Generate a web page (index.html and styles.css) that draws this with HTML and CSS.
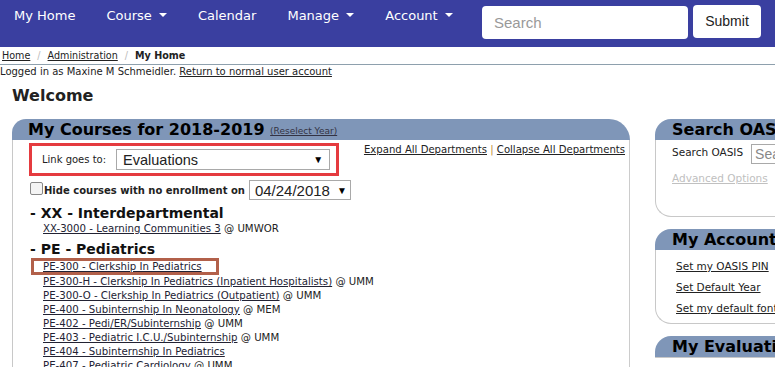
FILE: index.html
```html
<!DOCTYPE html>
<html lang="en">
<head>
<meta charset="utf-8">
<title>My Home</title>
<link rel="stylesheet" href="styles.css">
</head>
<body>
<nav class="topbar">
  <ul class="nav-items">
    <li class="nav-item">My Home</li>
    <li class="nav-item">Course <span class="caret"></span></li>
    <li class="nav-item">Calendar</li>
    <li class="nav-item">Manage <span class="caret"></span></li>
    <li class="nav-item">Account <span class="caret"></span></li>
  </ul>
  <form class="nav-search">
    <div class="search-input">Search</div>
    <div class="submit-btn">Submit</div>
  </form>
</nav>
<div class="breadcrumb">
  <a href="#">Home</a><span class="sep">/</span><a href="#">Administration</a><span class="sep">/</span><b>My Home</b>
</div>
<div class="login-line">Logged in as Maxine M Schmeidler. <a href="#">Return to normal user account</a></div>
<h1 class="welcome">Welcome</h1>
<div class="columns">
  <section class="panel main-panel">
    <div class="panel-head">My Courses for 2018-2019 <a class="small-link" href="#">(Reselect Year)</a></div>
    <div class="panel-body">
      <div class="top-row">
        <div class="link-goes highlight-red">
          <span class="label">Link goes to:</span>
          <div class="fake-select wide">Evaluations<span class="arrow">▼</span></div>
        </div>
        <div class="expand-links"><a href="#">Expand All Departments</a> <span class="bar">|</span> <a href="#">Collapse All Departments</a></div>
      </div>
      <div class="hide-row">
        <span class="checkbox"></span>
        <b>Hide courses with no enrollment on</b>
        <div class="fake-select date">04/24/2018<span class="arrow">▼</span></div>
      </div>
      <h3 class="dept">- XX - Interdepartmental</h3>
      <ul class="courses">
        <li><a href="#">XX-3000 - Learning Communities 3</a> @ UMWOR</li>
      </ul>
      <h3 class="dept">- PE - Pediatrics</h3>
      <ul class="courses">
        <li class="hl-row"><span class="highlight-brown"><a href="#">PE-300 - Clerkship In Pediatrics</a></span></li>
        <li><a href="#">PE-300-H - Clerkship In Pediatrics (Inpatient Hospitalists)</a> @ UMM</li>
        <li><a href="#">PE-300-O - Clerkship In Pediatrics (Outpatient)</a> @ UMM</li>
        <li><a href="#">PE-400 - Subinternship In Neonatology</a> @ MEM</li>
        <li><a href="#">PE-402 - Pedi/ER/Subinternship</a> @ UMM</li>
        <li><a href="#">PE-403 - Pediatric I.C.U./Subinternship</a> @ UMM</li>
        <li><a href="#">PE-404 - Subinternship In Pediatrics</a></li>
        <li><a href="#">PE-407 - Pediatric Cardiology</a> @ UMM</li>
      </ul>
    </div>
  </section>
  <aside class="side">
    <section class="panel side-panel">
      <div class="panel-head">Search OASIS</div>
      <div class="panel-body search-body">
        <div class="search-row"><span>Search OASIS</span><div class="side-input">Search</div></div>
        <a class="adv" href="#">Advanced Options</a>
      </div>
    </section>
    <section class="panel side-panel">
      <div class="panel-head">My Account</div>
      <div class="panel-body account-body">
        <a href="#">Set my OASIS PIN</a>
        <a href="#">Set Default Year</a>
        <a href="#">Set my default font</a>
      </div>
    </section>
    <section class="panel side-panel">
      <div class="panel-head">My Evaluations</div>
      <div class="panel-body"></div>
    </section>
  </aside>
</div>
</body>
</html>
```
FILE: styles.css
```css
html, body {
  margin: 0;
  padding: 0;
  width: 775px;
  height: 367px;
  overflow: hidden;
  background: #fff;
  font-family: "DejaVu Sans", Verdana, sans-serif;
  color: #222;
}
a { color: #222; }

.topbar {
  height: 47px;
  background: #3a3fa0;
  display: flex;
  align-items: flex-start;
}
.nav-items {
  list-style: none;
  margin: 0;
  padding: 0;
  display: flex;
}
.nav-item {
  color: #fff;
  font-size: 13px;
  padding: 8px 15px 0 14px;
  line-height: 16px;
  white-space: nowrap;
}
.nav-item + .nav-item { padding-left: 16px; }
.caret {
  display: inline-block;
  width: 0;
  height: 0;
  border-left: 4px solid transparent;
  border-right: 4px solid transparent;
  border-top: 4px solid #fff;
  vertical-align: 3px;
  margin-left: 3px;
}
.nav-search {
  margin: 5px 0 0 auto;
  padding-right: 14px;
  display: flex;
  gap: 5px;
}
.search-input {
  width: 206px;
  height: 33px;
  box-sizing: border-box;
  margin-top: 1px;
  background: #fff;
  border-radius: 4px;
  padding: 0 12px;
  font: 15px/33px "Liberation Sans", Arial, sans-serif;
  color: #999;
}
.submit-btn {
  width: 68px;
  height: 33px;
  box-sizing: border-box;
  background: #fff;
  border-radius: 4px;
  text-align: center;
  font: 14px/33px "Liberation Sans", Arial, sans-serif;
  color: #222;
}

.breadcrumb {
  font-size: 9.6px;
  line-height: 16px;
  padding: 1px 0 0 2px;
  border-bottom: 1px solid #8ea0ad;
  height: 16px;
}
.breadcrumb a { color: #222; }
.breadcrumb .sep { color: #bbb; margin: 0 7px; }
.login-line {
  font-size: 10px;
  line-height: 14px;
}
.welcome {
  font-size: 16px;
  margin: 6px 0 0 12px;
  line-height: 22px;
  color: #222;
}

.columns {
  display: flex;
  gap: 25px;
  margin: 12px 0 0 12px;
  align-items: flex-start;
}
.panel-head {
  background: #7f96b8;
  font-weight: bold;
  font-size: 16px;
  line-height: 21px;
  height: 21px;
  color: #000;
  white-space: nowrap;
  overflow: hidden;
}
.panel-body {
  background: #fff;
  border: 1px solid #c8c8c8;
  border-top: none;
}
.main-panel { width: 618px; flex: none; }
.main-panel .panel-head {
  border-radius: 16px 24px 0 0;
  padding-left: 16px;
}
.small-link {
  font-size: 9px;
  font-weight: normal;
  color: #334;
  vertical-align: 1px;
}
.main-panel .panel-body {
  padding: 3px 4px 0 16px;
  height: 240px;
  border-right: 1px solid #ccc;
}
.top-row {
  display: flex;
  justify-content: space-between;
}
.highlight-red {
  border: 3px solid #e53b3f;
  width: 310px;
  height: 33px;
  box-sizing: border-box;
  display: flex;
  align-items: center;
  padding-left: 10px;
}
.label { font-size: 10px; margin-right: 10px; }
.fake-select {
  border: 1px solid #a9a9a9;
  background: #fff;
  box-sizing: border-box;
  font-family: "Liberation Sans", Arial, sans-serif;
  display: flex;
  align-items: center;
  justify-content: space-between;
}
.fake-select.wide {
  width: 214px;
  height: 21px;
  font-size: 14.5px;
  padding: 0 6px;
}
.arrow { font-size: 10px; color: #000; }
.expand-links {
  font-size: 10.1px;
  padding-top: 1px;
}
.expand-links a { color: #222; }
.bar { color: #c0863a; }
.hide-row {
  display: flex;
  align-items: center;
  margin-top: 4px;
  font-size: 10px;
  height: 20px;
}
.checkbox {
  width: 11px;
  height: 11px;
  border: 1px solid #888;
  border-radius: 2px;
  background: #f4f4f4;
  margin: 0 1px 4px 1px;
}
.fake-select.date {
  width: 102px;
  height: 20px;
  font-size: 15px;
  padding: 0 3px 0 5px;
  margin-left: 4px;
}
.dept {
  margin: 4px 0 0 1px;
  font-size: 14px;
  line-height: 18px;
  color: #111;
}
.courses {
  list-style: none;
  margin: 0;
  padding: 0 0 0 14px;
  font-size: 10.2px;
  line-height: 14px;
}
.courses li { white-space: nowrap; }
.courses a { color: #223; }
.hl-row { height: 17px; }
.highlight-brown {
  display: inline-block;
  box-sizing: border-box;
  border: 3px solid #b2604a;
  margin-left: -12px;
  padding: 0 0 0 9px;
  height: 17px;
  line-height: 11px;
  width: 188px;
}

.side { display: flex; flex-direction: column; gap: 12px; flex: none; width: 200px; }
.side-panel .panel-head {
  border-radius: 16px 0 0 0;
  padding-left: 17px;
}
.side-panel .panel-body {
  border-radius: 0 0 0 16px;
  border-right: none;
  font-size: 10.5px;
}
.search-body {
  height: 72px;
  padding: 4px 0 0 16px;
}
.search-row { display: flex; gap: 8px; align-items: flex-start; }
.search-row span { padding-top: 2px; }
.side-input {
  border: 1px solid #a9a9a9;
  height: 20px;
  width: 60px;
  box-sizing: border-box;
  font: 14px/18px "Liberation Sans", Arial, sans-serif;
  padding-left: 3px;
  color: #888;
}
.adv {
  display: block;
  color: #c0c0c0;
  margin-top: 8px;
}
.account-body {
  height: 63px;
  padding: 10px 0 0 20px;
  display: flex;
  flex-direction: column;
  gap: 8px;
}
.account-body a { color: #222; line-height: 13px; }
```
